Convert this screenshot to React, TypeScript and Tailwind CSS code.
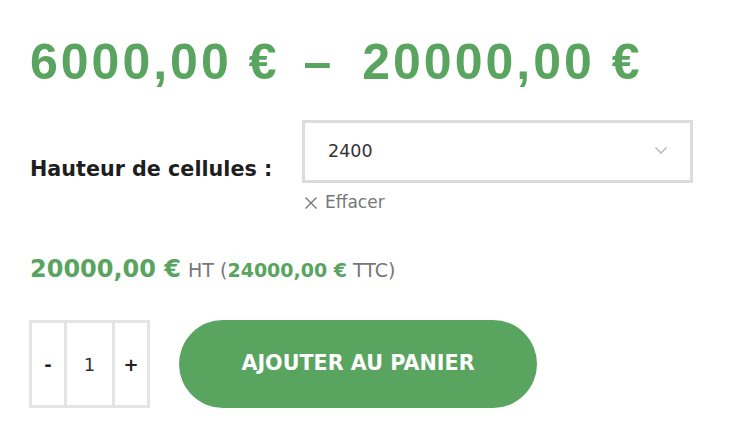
import React from "react";

const body = { fontFamily: '"DejaVu Sans", "Open Sans", sans-serif' };

export default function App() {
  return (
    <div className="w-[746px] h-[425px] bg-white overflow-hidden pl-[30px]" style={body}>
      {/* Price range */}
      <div
        className="flex items-center pt-[30px] h-[94px] text-[#59a45f] font-bold text-[50px] tracking-[3px] leading-none"
        style={{ fontFamily: '"Liberation Sans", Arial, sans-serif' }}
      >
        <span>6000,00 €</span>
        <span className="ml-[24px] mr-[28px]">–</span>
        <span>20000,00 €</span>
      </div>

      {/* Variation row */}
      <div className="flex items-center mt-[26px]">
        <div className="w-[272px] text-[20.7px] font-bold text-[#1e1e1e] pt-[4px]">Hauteur de cellules :</div>
        <div className="flex flex-col">
          <div className="w-[391px] h-[63px] border-[3px] border-[#dcdcdc] flex items-center justify-between pl-[23px] pr-[22px]">
            <span className="text-[17.5px] text-[#333]">2400</span>
            <svg width="14" height="9" viewBox="0 0 14 9" fill="none" className="mt-[-2px]">
              <path d="M1.5 1.5 L7 7 L12.5 1.5" stroke="#b5b5b5" strokeWidth="1.4" />
            </svg>
          </div>
          <div className="flex items-center mt-[8px] ml-[2px] text-[#777] text-[17px] h-[24px]">
            <svg width="14" height="14" viewBox="0 0 14 14" fill="none" className="mr-[7px]">
              <path d="M1.5 1.5 L12.5 12.5 M12.5 1.5 L1.5 12.5" stroke="#777" strokeWidth="1.4" />
            </svg>
            <span>Effacer</span>
          </div>
        </div>
      </div>

      {/* Price HT/TTC */}
      <div className="flex items-baseline mt-[36px] h-[32px] text-[#777] text-[19px]">
        <span className="text-[#59a45f] font-bold text-[24px]">20000,00 €</span>
        <span className="ml-[7px]">HT (</span>
        <span className="text-[#59a45f] font-bold text-[19px]">24000,00 €</span>
        <span className="ml-[6px]">TTC)</span>
      </div>

      {/* Quantity + button */}
      <div className="flex items-center mt-[37px] -ml-[1px]">
        <div className="flex h-[88px] border-[3px] border-[#e4e4e4]">
          <div className="w-[32px] flex items-center justify-center text-[18px] font-bold text-[#222]">-</div>
          <div className="w-[51px] border-x-[3px] border-[#e4e4e4] flex items-center justify-center text-[18px] text-[#333]">1</div>
          <div className="w-[32px] flex items-center justify-center text-[18px] font-bold text-[#222]">+</div>
        </div>
        <button className="ml-[29px] w-[358px] h-[88px] rounded-full bg-[#59a45f] text-white font-bold text-[20.7px] flex items-center justify-center">
          AJOUTER AU PANIER
        </button>
      </div>
    </div>
  );
}
